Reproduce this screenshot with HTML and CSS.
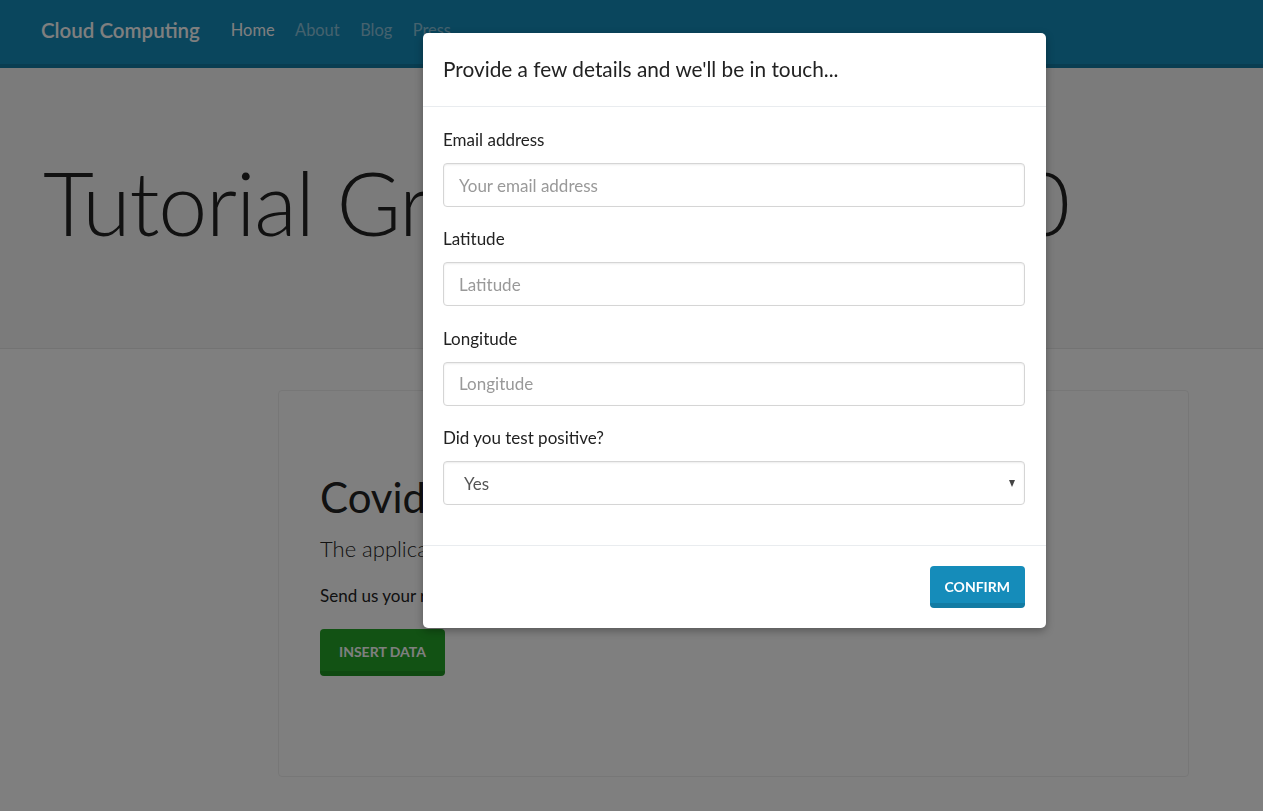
FILE: index.html
```html
<!DOCTYPE html>
<html lang="en">
<head>
<meta charset="utf-8">
<title>Cloud Computing</title>
<link rel="stylesheet" href="styles.css">
</head>
<body>
<nav class="navbar">
  <a class="brand" href="#">Cloud Computing</a>
  <ul class="nav">
    <li class="nav-item active"><a href="#">Home</a></li>
    <li class="nav-item"><a href="#">About</a></li>
    <li class="nav-item"><a href="#">Blog</a></li>
    <li class="nav-item"><a href="#">Press</a></li>
  </ul>
</nav>
<header class="jumbotron">
  <h1 class="display">Tutorial Group Project 2020</h1>
</header>
<main class="page">
  <section class="card">
    <h2 class="card-title">Covid-19 Map</h2>
    <p class="lead">The application</p>
    <p class="text">Send us your results.</p>
    <button class="btn btn-success btn-lg" type="button">Insert data</button>
  </section>
</main>

<div class="backdrop"></div>
<div class="modal">
  <div class="modal-header">
    <h5 class="modal-title">Provide a few details and we'll be in touch...</h5>
  </div>
  <form class="modal-body">
    <div class="form-group">
      <label class="label" for="email">Email address</label>
      <input class="input" id="email" type="email" placeholder="Your email address">
    </div>
    <div class="form-group">
      <label class="label" for="lat">Latitude</label>
      <input class="input" id="lat" type="text" placeholder="Latitude">
    </div>
    <div class="form-group">
      <label class="label" for="lng">Longitude</label>
      <input class="input" id="lng" type="text" placeholder="Longitude">
    </div>
    <div class="form-group">
      <label class="label" for="pos">Did you test positive?</label>
      <div class="select-wrap">
        <select class="input select" id="pos">
          <option>Yes</option>
          <option>No</option>
        </select>
      </div>
    </div>
  </form>
  <div class="modal-footer">
    <button class="btn btn-primary" type="button">Confirm</button>
  </div>
</div>
</body>
</html>
```

FILE: styles.css
```css
* { box-sizing: border-box; }

html, body {
  margin: 0;
  padding: 0;
  height: 100%;
}

body {
  font-family: "Lato", "Open Sans", "Noto Sans", sans-serif;
  font-size: 16px;
  line-height: 1.5;
  color: #222;
  background: #fff;
  overflow: hidden;
}

/* Navbar */
.navbar {
  height: 68px;
  background: #158cba;
  border-bottom: 4px solid #127ba3;
  display: flex;
  align-items: center;
  padding: 0 0 4px 41px;
}

.brand {
  font-size: 20.5px;
  font-weight: 600;
  color: #fff;
  text-decoration: none;
  margin-right: 31px;
  white-space: nowrap;
}

.nav {
  list-style: none;
  margin: 0;
  padding: 0;
  display: flex;
  gap: 20.5px;
}

.nav-item a {
  font-size: 16.4px;
  color: rgba(255, 255, 255, 0.5);
  text-decoration: none;
}

.nav-item.active a { color: #fff; }

/* Jumbotron */
.jumbotron {
  height: 281px;
  background: #f6f6f6;
  border-bottom: 1px solid #e7e7e7;
  padding: 82px 0 0 43px;
}

.display {
  margin: 0;
  font-size: 88px;
  font-weight: 300;
  line-height: 1.2;
  color: #222;
  letter-spacing: -1.25px;
  white-space: nowrap;
}

/* Card */
.page {
  padding: 41px 0 0 278px;
}

.card {
  width: 911px;
  height: 387px;
  border: 1px solid #eee;
  border-radius: 4px;
  background: #fff;
  padding: 80px 41px 0;
}

.card-title {
  margin: 0 0 8px;
  font-size: 42px;
  font-weight: 400;
  line-height: 1.25;
}

.lead {
  margin: 0 0 19px;
  font-size: 22px;
  font-weight: 300;
  line-height: 33px;
}

.text {
  margin: 0 0 21px;
  font-size: 17px;
  line-height: 24px;
}

/* Buttons */
.btn {
  font-family: inherit;
  font-weight: 700;
  text-transform: uppercase;
  color: #fff;
  border: 0;
  border-radius: 4px;
  cursor: pointer;
}

.btn-primary {
  height: 42px;
  padding: 4px 15px 0;
  font-size: 14px;
  background: #158cba;
  border-bottom: 5px solid #127ba3;
}

.btn-success {
  height: 47px;
  padding: 4px 19px 0;
  background: #24a528;
  border-bottom: 5px solid #1f9222;
}

.btn-lg { font-size: 14px; }

/* Backdrop + modal */
.backdrop {
  position: fixed;
  inset: 0;
  background: rgba(0, 0, 0, 0.5);
}

.modal {
  position: absolute;
  left: 423px;
  top: 33px;
  width: 623px;
  background: #fff;
  border-radius: 5px;
  box-shadow: 0 3px 9px rgba(0, 0, 0, 0.3);
}

.modal-header {
  padding: 21px 21px 22px 20px;
  border-bottom: 1px solid #e9ecef;
}

.modal-title {
  margin: 0;
  font-size: 20.8px;
  font-weight: 400;
  line-height: 30px;
  color: #222;
}

.modal-body {
  padding: 21px 21px 19.8px 20px;
}

.form-group {
  margin-bottom: 20.4px;
}

.label {
  display: block;
  font-size: 17px;
  line-height: 24px;
  margin-bottom: 11px;
  color: #222;
}

.input {
  display: block;
  width: 100%;
  height: 44px;
  padding: 0 15px;
  font-family: inherit;
  font-size: 17px;
  color: #555;
  background: #fff;
  border: 1px solid #d5d5d5;
  border-radius: 4px;
  box-shadow: inset 0 1px 2px rgba(0, 0, 0, 0.08);
  outline: none;
}

.input::placeholder { color: #999; }

.select-wrap { position: relative; }

.select {
  appearance: none;
  -webkit-appearance: none;
  padding-left: 20px;
}

.select-wrap::after {
  content: "";
  position: absolute;
  right: 10px;
  top: 19px;
  border-left: 3.5px solid transparent;
  border-right: 3.5px solid transparent;
  border-top: 7px solid #444;
  pointer-events: none;
}

.modal-footer {
  display: flex;
  justify-content: flex-end;
  padding: 20px 21px 20px 20px;
  border-top: 1px solid #e9ecef;
}
```
